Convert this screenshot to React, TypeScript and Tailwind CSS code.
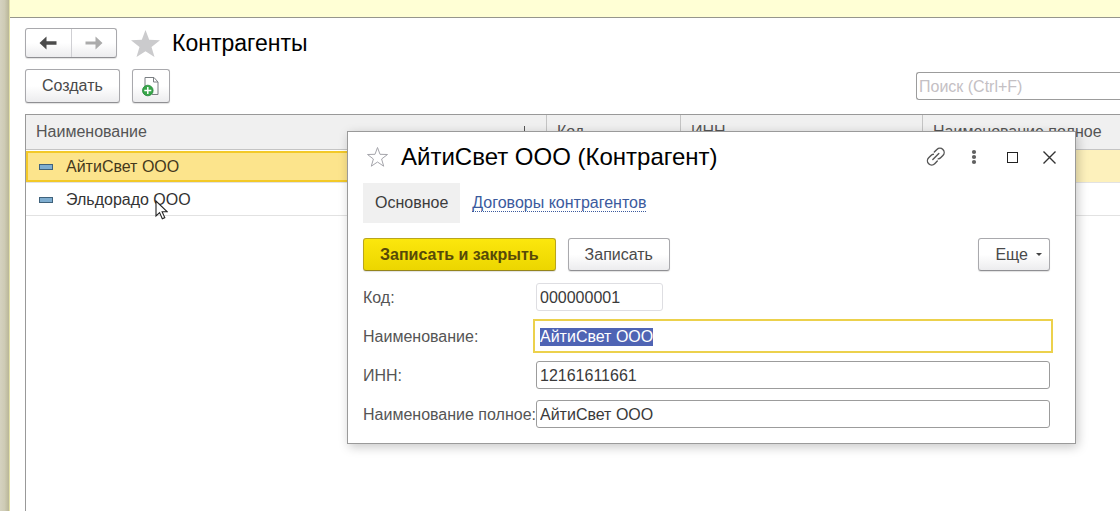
import { useEffect, useRef } from "react";
import type { ReactNode } from "react";

const buttonBase =
  "flex items-center justify-center rounded-[3px] border border-[#a9a9ad] border-b-[#8f8f93] bg-gradient-to-b from-white from-50% to-[#ececee] text-[#4a4a4a] shadow-[0_1px_1px_rgba(0,0,0,0.12)]";

const fieldBase =
  "h-7 rounded-[3px] border bg-white px-[3px] pt-0.5 text-[#3a3a3a] outline-none";

function ArrowLeft() {
  return (
    <svg width="18" height="14" viewBox="0 0 18 14" fill="currentColor" aria-hidden="true">
      <path d="M0.5 7 7.500 0.500v4.800h10v3.400h-10V13.500z" />
    </svg>
  );
}

function ArrowRight() {
  return (
    <svg width="18" height="14" viewBox="0 0 18 14" fill="currentColor" aria-hidden="true">
      <path d="M17.5 7 10.500 0.500v5H0.5v3h10V13.500z" />
    </svg>
  );
}

function NewDocumentIcon() {
  return (
    <svg width="20" height="22" viewBox="0 0 20 22" fill="none" aria-hidden="true">
      <path d="M4 11.500V2.500h9l4 4.500v12.500h-6" stroke="#7b7f83" />
      <path d="M12.500 2.500v4.500h4.500" stroke="#7b7f83" />
      <circle cx="6.8" cy="15.500" r="5.3" fill="#37a648" stroke="#23853a" strokeWidth="0.8" />
      <path d="M6.8 12v7M3.300 15.500h7" stroke="#fff" strokeWidth="1.500" />
    </svg>
  );
}

function ItemMark() {
  return <span className="h-[6px] w-[14px] shrink-0 border border-[#3f627c] bg-[#7eadd0]" />;
}

function Cursor() {
  return (
    <svg
      className="absolute left-[129px] top-[17px]"
      width="13"
      height="20"
      viewBox="0 0 13 20"
      aria-hidden="true"
    >
      <path
        d="M1 1v15l3.6-3.4 2.7 6.1 2.5-1.1-2.7-5.9 4.9-.1z"
        fill="#fff"
        stroke="#222"
        strokeWidth="1.1"
      />
    </svg>
  );
}

function FormRow({ id, label, children }: { id: string; label: string; children: ReactNode }) {
  return (
    <div className="flex h-[39px] items-center">
      <label htmlFor={id} className="w-[173px] shrink-0 whitespace-nowrap pt-0.5 text-[#555]">
        {label}
      </label>
      {children}
    </div>
  );
}

function CounterpartyDialog() {
  const nameRef = useRef<HTMLInputElement>(null);

  useEffect(() => {
    nameRef.current?.focus();
    nameRef.current?.select();
  }, []);

  return (
    <section
      role="dialog"
      aria-labelledby="dialog-title"
      className="absolute left-[347px] top-[131px] w-[729px] border border-[#9a9a9a] bg-white px-[15px] pb-[10px] shadow-[2px_3px_10px_rgba(0,0,0,0.22)]"
    >
      <header className="flex h-[50px] items-center">
        <svg className="ml-[3px] shrink-0" width="23" height="22" viewBox="0 0 23 22" fill="none" aria-hidden="true">
          <path
            d="M11.5 1.5 14 8.3l7.5.2-5.9 4.5 2.1 7.2-6.2-4.2-6.2 4.2 2.1-7.2L1.500 8.500 9 8.300z"
            stroke="#a5a5ab"
          />
        </svg>
        <h2 id="dialog-title" className="ml-3 flex-1 text-[24px] text-black">
          АйтиСвет ООО (Контрагент)
        </h2>
        <div className="-mr-2 flex items-center text-[#444]">
          <button type="button" aria-label="Получить ссылку" className="flex w-[39px] justify-center">
            <svg width="22" height="22" viewBox="0 0 22 22" fill="none" stroke="#555" strokeWidth="1.4" strokeLinecap="round" aria-hidden="true">
              <path d="M7.8 13.600l6-6" />
              <path d="M9.300 6.100l2.600-2.600a4.200 4.200 0 0 1 6 6l-2.300 2.300c-.7.700-1.500 1-2.400 1.100" />
              <path d="M12.300 15.100l-2.600 2.600a4.200 4.200 0 0 1-6-6l2.300-2.300c.7-.7 1.500-1 2.400-1.100" />
            </svg>
          </button>
          <button type="button" aria-label="Действия" className="flex w-[38px] justify-center">
            <svg width="6" height="16" viewBox="0 0 6 16" fill="#606060" aria-hidden="true">
              <circle cx="3" cy="3" r="2.100" />
              <circle cx="3" cy="8" r="2.100" />
              <circle cx="3" cy="13" r="2.100" />
            </svg>
          </button>
          <button type="button" aria-label="Развернуть" className="flex w-[38px] justify-center">
            <span className="size-[11px] border border-[#222]" />
          </button>
          <button type="button" aria-label="Закрыть" className="flex w-[37px] justify-center">
            <svg width="13" height="13" viewBox="0 0 13 13" stroke="#333" strokeWidth="1.400" aria-hidden="true">
              <path d="M0.500 0.500l12 12M12.500 0.500l-12 12" />
            </svg>
          </button>
        </div>
      </header>

      <nav className="mt-px flex h-10 items-center">
        <a href="#main" className="flex h-10 items-center bg-[#f0f0f0] px-3 text-[#3c3c3c]">
          Основное
        </a>
        <a href="#contracts" className="ml-3 border-b border-dotted border-[#3b5a9d] leading-[17px] text-[#3b5a9d]">
          Договоры контрагентов
        </a>
      </nav>

      <div className="mt-[15px] flex h-[33px] gap-3">
        <button
          type="button"
          className="flex items-center justify-center rounded-[3px] border border-[#b9a51d] border-b-[#94841c] bg-gradient-to-b from-[#fbe70d] to-[#ecd600] px-4 font-bold text-[#574a08] shadow-[0_1px_1px_rgba(0,0,0,0.12)]"
        >
          Записать и закрыть
        </button>
        <button type="button" className={`${buttonBase} px-4`}>
          Записать
        </button>
        <button type="button" className={`${buttonBase} ml-auto mr-[10px] gap-2 pl-4 pr-[7px]`}>
          Еще
          <svg width="6" height="3" viewBox="0 0 6 3" fill="#444" aria-hidden="true">
            <path d="M0 0h6L3 3z" />
          </svg>
        </button>
      </div>

      <form className="mt-[6px] pr-[10px]">
        <FormRow id="code" label="Код:">
          <input id="code" readOnly defaultValue="000000001" className={`${fieldBase} w-[127px] border-[#dedee2]`} />
        </FormRow>
        <FormRow id="name" label="Наименование:">
          <div className="-mx-[3px] flex-1 border-2 border-[#ecd14c] px-px">
            <input
              ref={nameRef}
              id="name"
              defaultValue="АйтиСвет ООО"
              className="block h-[30px] w-full bg-white px-1 pt-0.5 text-[#3a3a3a] outline-none selection:bg-[#4f64b4] selection:text-white"
            />
          </div>
        </FormRow>
        <FormRow id="inn" label="ИНН:">
          <input id="inn" defaultValue="12161611661" className={`${fieldBase} w-full border-[#9c9c9c]`} />
        </FormRow>
        <FormRow id="full-name" label="Наименование полное:">
          <input id="full-name" defaultValue="АйтиСвет ООО" className={`${fieldBase} w-full border-[#9c9c9c]`} />
        </FormRow>
      </form>
    </section>
  );
}

export default function App() {
  return (
    <div className="relative flex min-h-screen overflow-hidden bg-white font-['Liberation_Sans',sans-serif] text-base leading-5">
      <div className="w-[10px] shrink-0 border-r border-[#e4e2a8] bg-gradient-to-r from-[#d5d2c0] via-[#cecbb5] to-[#b9b698]" />

      <main className="flex min-w-0 flex-1 flex-col">
        <div className="h-[18px] shrink-0 border-b border-[#96968c] bg-[#ffffd5]" />

        <div className="flex flex-1 flex-col pl-[15px] pt-[10px]">
          <header className="flex h-[30px] items-center">
            <div className="flex h-[30px] w-[92px] rounded-[3px] border border-[#a9a9ad] border-b-[#8f8f93] bg-gradient-to-b from-white from-50% to-[#ececee] shadow-[0_1px_1px_rgba(0,0,0,0.12)]">
              <button type="button" aria-label="Назад" className="flex flex-1 items-center justify-center border-r border-[#cfcfd3] text-[#4b4b4b]">
                <ArrowLeft />
              </button>
              <button type="button" aria-label="Вперед" className="flex flex-1 items-center justify-center text-[#ababab]">
                <ArrowRight />
              </button>
            </div>
            <svg className="ml-[14px]" width="29" height="27" viewBox="0 0 29 27" fill="#cbcbcd" aria-hidden="true">
              <path d="M14.500 0 18.200 9.800 29 10.300 20.500 16.900 23.500 27 14.500 21.200 5.500 27 8.500 16.900 0 10.300 10.800 9.800z" />
            </svg>
            <h1 className="ml-3 text-[23px] text-black">Контрагенты</h1>
          </header>

          <div className="mt-[11px] flex h-[34px] items-center gap-3">
            <button type="button" className={`${buttonBase} h-[34px] px-4`}>
              Создать
            </button>
            <button type="button" aria-label="Создать копированием" className={`${buttonBase} h-[34px] w-[38px]`}>
              <NewDocumentIcon />
            </button>
            <input
              type="search"
              aria-label="Поиск"
              placeholder="Поиск (Ctrl+F)"
              className="ml-auto h-7 w-[204px] rounded-l-[3px] border border-r-0 border-[#9c9c9c] px-[2px] pt-0.5 outline-none placeholder:text-[#c4c0c4]"
            />
          </div>

          <div className="mt-[11px] flex-1 border-l border-t border-[#999]">
            <table className="w-full table-fixed border-separate border-spacing-0 text-left">
              <colgroup>
                <col className="w-[521px]" />
                <col className="w-[134px]" />
                <col className="w-[242px]" />
                <col />
              </colgroup>
              <thead>
                <tr className="h-[35px] bg-[#f0f0f0] text-[#555] *:border-b *:border-[#c4c4c4]">
                  <th className="border-r p-0 pl-[10px] font-normal">
                    <div className="flex items-center justify-between pr-[18px]">
                      Наименование
                      <svg width="7" height="12" viewBox="0 0 7 12" fill="none" stroke="#555" aria-hidden="true">
                        <path d="M3.500 0v11M0.500 8l3 3 3-3" />
                      </svg>
                    </div>
                  </th>
                  <th className="border-r p-0 pl-[10px] font-normal">Код</th>
                  <th className="border-r p-0 pl-[10px] font-normal">ИНН</th>
                  <th className="p-0 pl-[10px] font-normal">Наименование полное</th>
                </tr>
              </thead>
              <tbody className="text-[#333]">
                <tr className="h-[33px] bg-[#fdf1bc] *:border-b *:border-[#e2e2e2]">
                  <td className="bg-white p-0 pt-px">
                    <div className="flex h-[31px] items-center gap-[13px] border-2 border-[#f3c928] bg-[#fce48c] pl-[11px] text-[#44391c]">
                      <ItemMark />
                      АйтиСвет ООО
                    </div>
                  </td>
                  <td className="p-0" />
                  <td className="p-0" />
                  <td className="p-0" />
                </tr>
                <tr className="h-[33px] *:border-b *:border-[#e2e2e2]">
                  <td className="p-0">
                    <div className="relative flex h-8 items-center gap-[13px] pl-[13px] pt-0.5">
                      <ItemMark />
                      Эльдорадо ООО
                      <Cursor />
                    </div>
                  </td>
                  <td className="p-0" />
                  <td className="p-0" />
                  <td className="p-0" />
                </tr>
              </tbody>
            </table>
          </div>
        </div>
      </main>

      <CounterpartyDialog />
    </div>
  );
}
